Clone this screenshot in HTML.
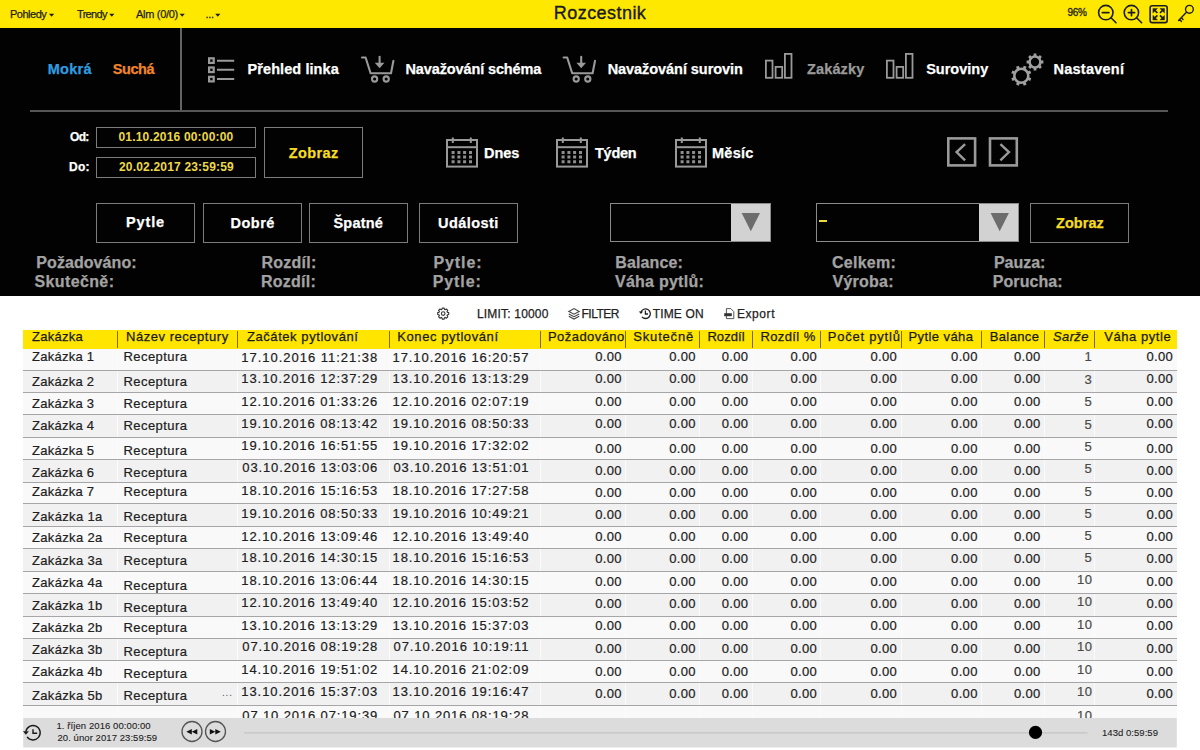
<!DOCTYPE html>
<html><head><meta charset="utf-8">
<style>
html,body{margin:0;padding:0;}
body{width:1200px;height:750px;position:relative;overflow:hidden;background:#fff;font-family:"Liberation Sans",sans-serif;}
.t{position:absolute;line-height:1;white-space:nowrap;}
.abs{position:absolute;}
.box{position:absolute;box-sizing:border-box;border:1px solid #7c7c7c;}
svg{position:absolute;left:0;top:0;overflow:visible;}
</style></head><body>
<!-- top yellow bar -->
<div class="abs" style="left:0;top:0;width:1200px;height:28px;background:#ffe800"></div>
<!-- black area -->
<div class="abs" style="left:0;top:28px;width:1200px;height:268px;background:#020202"></div>
<!-- nav separators -->
<div class="abs" style="left:180px;top:28px;width:2px;height:83px;background:#646464"></div>
<div class="abs" style="left:29.5px;top:110px;width:1138.5px;height:2px;background:#565656"></div>
<!-- boxes -->
<div class="box" style="left:96px;top:126.5px;width:160px;height:21px"></div>
<div class="box" style="left:96px;top:156.5px;width:160px;height:21px"></div>
<div class="box" style="left:264px;top:126.5px;width:99px;height:51px"></div>
<div class="box" style="left:96px;top:203px;width:99px;height:40px"></div>
<div class="box" style="left:203px;top:203px;width:99px;height:40px"></div>
<div class="box" style="left:309px;top:203px;width:99px;height:40px"></div>
<div class="box" style="left:419px;top:203px;width:99px;height:40px"></div>
<div class="box" style="left:610px;top:202.5px;width:160.5px;height:39.5px;border-color:#8a8a8a"></div>
<div class="abs" style="left:730.8px;top:203.5px;width:39px;height:37.5px;background:#d2d2d2"></div>
<div class="box" style="left:816px;top:202.5px;width:202.5px;height:39.5px;border-color:#8a8a8a"></div>
<div class="abs" style="left:979.3px;top:203.5px;width:39px;height:37.5px;background:#d2d2d2"></div>
<div class="box" style="left:1030px;top:203px;width:99px;height:39.5px"></div>
<div class="abs" style="left:818.8px;top:219.8px;width:8.2px;height:2.4px;background:#e8dc38"></div>

<svg width="1200" height="750" viewBox="0 0 1200 750">
 <!-- top bar carets -->
 <g fill="#1e1e1e">
  <path d="M49 13.8h5.2l-2.6 3z"/><path d="M109.2 13.8h5.2l-2.6 3z"/><path d="M179.6 13.8h5.2l-2.6 3z"/><path d="M215.2 13.8h5.2l-2.6 3z"/>
 </g>
 <!-- zoom icons -->
 <g fill="none" stroke="#1e1e1e" stroke-width="1.6" stroke-linecap="round">
  <circle cx="1105.8" cy="12.6" r="7.2"/><path d="M1111 17.8l5 5"/><path d="M1102.4 12.6h6.4" stroke-width="1.9"/>
  <circle cx="1131.4" cy="12.6" r="7.2"/><path d="M1136.6 17.8l5 5"/><path d="M1128.4 12.6h6.2M1131.5 9.5v6.2" stroke-width="1.7"/>
  <rect x="1150.1" y="5.8" width="17.1" height="16.8" rx="2.2"/>
  <circle cx="1189.4" cy="9.3" r="3.9" stroke-width="1.4"/><path d="M1186.7 12.1l-8.1 8.5M1179.6 19.6l1.9 2M1181.4 17.7l1.6 1.7" stroke-width="1.4"/>
 </g>
 <g fill="#1e1e1e" stroke="#1e1e1e" stroke-width="1.4">
  <path d="M1154.6 10.2l2.8 2.8M1162.8 10.2l-2.8 2.8M1154.6 18.2l2.8-2.8M1162.8 18.2l-2.8-2.8" stroke-width="1.7"/>
  <path d="M1152.9 8.5h4.6l-4.6 4.6zM1164.5 8.5h-4.6l4.6 4.6zM1152.9 19.9h4.6l-4.6-4.6zM1164.5 19.9h-4.6l4.6-4.6z" stroke-width="0.4"/>
 </g>
 <!-- list icon -->
 <g fill="none" stroke="#9a9a9a" stroke-width="2.2">
  <rect x="209.1" y="58.3" width="4.6" height="4.6"/><rect x="209.1" y="67.5" width="4.6" height="4.6"/><rect x="209.1" y="76.8" width="4.6" height="4.6"/>
  <path d="M217 60.7h17.2M217 69.8h17.2M217 79h17.2" stroke-width="2"/>
 </g>
 <!-- carts -->
 <g fill="none" stroke="#9a9a9a" stroke-width="2.1" stroke-linejoin="round" stroke-linecap="round">
  <g id="cart">
   <path d="M362 57.5h3.6l5 15.8h20.4l2.4-12.4"/>
   <circle cx="374.6" cy="79" r="2.6"/><circle cx="386.2" cy="79" r="2.6"/>
   <path d="M379.6 56.8v7"/>
  </g>
  <g transform="translate(201.6 0)">
   <path d="M362 57.5h3.6l5 15.8h20.4l2.4-12.4"/>
   <circle cx="374.6" cy="79" r="2.6"/><circle cx="386.2" cy="79" r="2.6"/>
   <path d="M379.6 56.8v7"/>
  </g>
 </g>
 <g fill="#9a9a9a"><path d="M374.8 62.8h9.6l-4.8 5.4z"/><path d="M576.4 62.8h9.6l-4.8 5.4z"/></g>
 <!-- bars -->
 <g fill="none" stroke="#9a9a9a" stroke-width="1.8">
  <rect x="765.9" y="60.6" width="6.6" height="17.2"/><rect x="775.6" y="66.9" width="6.6" height="10.9"/><rect x="784.9" y="53.9" width="6.6" height="23.9"/>
  <rect x="886.9" y="60.6" width="6.6" height="17.2"/><rect x="896.6" y="66.9" width="6.6" height="10.9"/><rect x="905.9" y="53.9" width="6.6" height="23.9"/>
 </g>
 <!-- gears -->
 <g fill="none" stroke="#a0a0a0">
  <circle cx="1021.3" cy="75.7" r="7" stroke-width="2.6"/>
  <path transform="rotate(22.5 1021.3 75.7)" d="M1021.3 65.5v3M1021.3 82.9v3M1011.1 75.7h3M1028.5 75.7h3M1014.1 68.5l2.1 2.1M1026.4 80.8l2.1 2.1M1028.5 68.5l-2.1 2.1M1014.1 82.9l2.1-2.1" stroke-width="3"/>
  <circle cx="1035" cy="62" r="5.4" stroke-width="2.5"/>
  <path d="M1035 53.6v2.6M1035 67.8v2.6M1026.6 62h2.6M1040.8 62h2.6M1029.1 56.1l1.8 1.8M1039.1 66.1l1.8 1.8M1040.9 56.1l-1.8 1.8M1029.1 67.9l1.8-1.8" stroke-width="2.8"/>
 </g>
 <!-- calendars -->
 <g id="cal" fill="none" stroke="#9a9a9a" stroke-width="2">
  <rect x="447" y="140" width="30" height="26.6"/><path d="M447 147.2h30"/><path d="M452.8 137.5v5.5M470.8 137.5v5.5"/>
 </g>
 <g fill="#8e8e8e">
  <path d="M451.6 151h3v3h-3zM457.4 151h3v3h-3zM463.1 151h3v3h-3zM469 151h3v3h-3zM451.6 155.6h3v3h-3zM457.4 155.6h3v3h-3zM463.1 155.6h3v3h-3zM469 155.6h3v3h-3zM451.6 160.2h3v3h-3zM457.4 160.2h3v3h-3zM463.1 160.2h3v3h-3zM469 160.2h3v3h-3z"/>
 </g>
 <g transform="translate(110 0)">
  <g fill="none" stroke="#9a9a9a" stroke-width="2"><rect x="447" y="140" width="30" height="26.6"/><path d="M447 147.2h30"/><path d="M452.8 137.5v5.5M470.8 137.5v5.5"/></g>
  <g fill="#8e8e8e"><path d="M451.6 151h3v3h-3zM457.4 151h3v3h-3zM463.1 151h3v3h-3zM469 151h3v3h-3zM451.6 155.6h3v3h-3zM457.4 155.6h3v3h-3zM463.1 155.6h3v3h-3zM469 155.6h3v3h-3zM451.6 160.2h3v3h-3zM457.4 160.2h3v3h-3zM463.1 160.2h3v3h-3zM469 160.2h3v3h-3z"/></g>
 </g>
 <g transform="translate(229 0)">
  <g fill="none" stroke="#9a9a9a" stroke-width="2"><rect x="447" y="140" width="30" height="26.6"/><path d="M447 147.2h30"/><path d="M452.8 137.5v5.5M470.8 137.5v5.5"/></g>
  <g fill="#8e8e8e"><path d="M451.6 151h3v3h-3zM457.4 151h3v3h-3zM463.1 151h3v3h-3zM469 151h3v3h-3zM451.6 155.6h3v3h-3zM457.4 155.6h3v3h-3zM463.1 155.6h3v3h-3zM469 155.6h3v3h-3zM451.6 160.2h3v3h-3zM457.4 160.2h3v3h-3zM463.1 160.2h3v3h-3zM469 160.2h3v3h-3z"/></g>
 </g>
 <!-- arrow boxes -->
 <g fill="none" stroke="#9a9a9a" stroke-width="2.6">
  <rect x="948.3" y="138.4" width="26.8" height="27"/><rect x="990" y="138.4" width="26.8" height="27"/>
 </g>
 <g fill="none" stroke="#9a9a9a" stroke-width="2.4">
  <path d="M965.1 144.2l-8.5 7.9 8.5 8.2"/><path d="M1000.4 144.2l8.5 7.9-8.5 8.2"/>
 </g>
 <!-- dropdown triangles -->
 <g fill="#6c6c6c"><path d="M741.7 213h18.3l-9.2 18.3z"/><path d="M990.6 213h18.3l-9.2 18.3z"/></g>

 <!-- toolbar icons -->
 <g fill="none" stroke="#333" stroke-width="1.1" stroke-linejoin="round">
  <path d="M447.30 312.30 L448.71 312.62 L448.71 314.58 L447.30 314.90 L447.02 315.58 L447.79 316.81 L446.41 318.19 L445.18 317.42 L444.50 317.70 L444.18 319.11 L442.22 319.11 L441.90 317.70 L441.22 317.42 L439.99 318.19 L438.61 316.81 L439.38 315.58 L439.10 314.90 L437.69 314.58 L437.69 312.62 L439.10 312.30 L439.38 311.62 L438.61 310.39 L439.99 309.01 L441.22 309.78 L441.90 309.50 L442.22 308.09 L444.18 308.09 L444.50 309.50 L445.18 309.78 L446.41 309.01 L447.79 310.39 L447.02 311.62Z"/>
  <circle cx="443.2" cy="313.6" r="1.8"/>
 </g>
 <g fill="none" stroke="#444" stroke-width="1.1">
  <path d="M568.8 311.4l5.2-2.8 5.2 2.8-5.2 2.8z"/><path d="M568.8 313.9l5.2 2.8 5.2-2.8"/><path d="M568.8 316.3l5.2 2.8 5.2-2.8"/>
 </g>
 <g fill="none" stroke="#222" stroke-width="1.3">
  <path d="M641 312.2a4.8 4.8 0 1 1 0.9 4.6"/><path d="M645.4 310.6v3.4h2.6"/>
 </g>
 <path d="M638.8 311.6l2.2 2.4 2-2.4z" fill="#222"/>
 <g fill="none" stroke="#444" stroke-width="0.9">
  <path d="M726.4 308.6h4.4l3 3v7h-7.4z"/>
 </g>
 <rect x="724.2" y="313.2" width="7.6" height="3" fill="#333"/>

</svg>
<div style='position:absolute;left:23px;top:330px;width:1154px;height:18.8px;background:#ffe500'></div>
<div style='position:absolute;left:117.0px;top:331px;width:1px;height:17px;background:#7d6a00'></div>
<div style='position:absolute;left:236.5px;top:331px;width:1px;height:17px;background:#7d6a00'></div>
<div style='position:absolute;left:388.8px;top:331px;width:1px;height:17px;background:#7d6a00'></div>
<div style='position:absolute;left:539.5px;top:331px;width:1px;height:17px;background:#7d6a00'></div>
<div style='position:absolute;left:625.3px;top:331px;width:1px;height:17px;background:#7d6a00'></div>
<div style='position:absolute;left:699.3px;top:331px;width:1px;height:17px;background:#7d6a00'></div>
<div style='position:absolute;left:751.8px;top:331px;width:1px;height:17px;background:#7d6a00'></div>
<div style='position:absolute;left:820.4px;top:331px;width:1px;height:17px;background:#7d6a00'></div>
<div style='position:absolute;left:900.5px;top:331px;width:1px;height:17px;background:#7d6a00'></div>
<div style='position:absolute;left:981.1px;top:331px;width:1px;height:17px;background:#7d6a00'></div>
<div style='position:absolute;left:1043.9px;top:331px;width:1px;height:17px;background:#7d6a00'></div>
<div style='position:absolute;left:1094.1px;top:331px;width:1px;height:17px;background:#7d6a00'></div>
<div style='position:absolute;left:23px;top:348.8px;width:1154px;height:21.6px;background:#f9f9f9'></div>
<div style='position:absolute;left:23px;top:370.4px;width:1154px;height:22.4px;background:#f1f1f1'></div>
<div style='position:absolute;left:23px;top:392.8px;width:1154px;height:21.6px;background:#f9f9f9'></div>
<div style='position:absolute;left:23px;top:414.4px;width:1154px;height:22.7px;background:#f1f1f1'></div>
<div style='position:absolute;left:23px;top:437.1px;width:1154px;height:22.4px;background:#f9f9f9'></div>
<div style='position:absolute;left:23px;top:459.5px;width:1154px;height:22.7px;background:#f1f1f1'></div>
<div style='position:absolute;left:23px;top:482.2px;width:1154px;height:21.6px;background:#f9f9f9'></div>
<div style='position:absolute;left:23px;top:503.8px;width:1154px;height:22.4px;background:#f1f1f1'></div>
<div style='position:absolute;left:23px;top:526.2px;width:1154px;height:22.4px;background:#f9f9f9'></div>
<div style='position:absolute;left:23px;top:548.6px;width:1154px;height:22.9px;background:#f1f1f1'></div>
<div style='position:absolute;left:23px;top:571.5px;width:1154px;height:22.2px;background:#f9f9f9'></div>
<div style='position:absolute;left:23px;top:593.7px;width:1154px;height:22.7px;background:#f1f1f1'></div>
<div style='position:absolute;left:23px;top:616.4px;width:1154px;height:22.1px;background:#f9f9f9'></div>
<div style='position:absolute;left:23px;top:638.5px;width:1154px;height:22.4px;background:#f1f1f1'></div>
<div style='position:absolute;left:23px;top:660.9px;width:1154px;height:21.8px;background:#f9f9f9'></div>
<div style='position:absolute;left:23px;top:682.7px;width:1154px;height:22.5px;background:#f1f1f1'></div>
<div style='position:absolute;left:23px;top:705.2px;width:1154px;height:12.8px;background:#f9f9f9'></div>
<div style='position:absolute;left:117.0px;top:349px;width:1px;height:369px;background:#fbfbfb'></div>
<div style='position:absolute;left:236.5px;top:349px;width:1px;height:369px;background:#fbfbfb'></div>
<div style='position:absolute;left:388.8px;top:349px;width:1px;height:369px;background:#fbfbfb'></div>
<div style='position:absolute;left:539.5px;top:349px;width:1px;height:369px;background:#fbfbfb'></div>
<div style='position:absolute;left:625.3px;top:349px;width:1px;height:369px;background:#fbfbfb'></div>
<div style='position:absolute;left:699.3px;top:349px;width:1px;height:369px;background:#fbfbfb'></div>
<div style='position:absolute;left:751.8px;top:349px;width:1px;height:369px;background:#fbfbfb'></div>
<div style='position:absolute;left:820.4px;top:349px;width:1px;height:369px;background:#fbfbfb'></div>
<div style='position:absolute;left:900.5px;top:349px;width:1px;height:369px;background:#fbfbfb'></div>
<div style='position:absolute;left:981.1px;top:349px;width:1px;height:369px;background:#fbfbfb'></div>
<div style='position:absolute;left:1043.9px;top:349px;width:1px;height:369px;background:#fbfbfb'></div>
<div style='position:absolute;left:1094.1px;top:349px;width:1px;height:369px;background:#fbfbfb'></div>
<div style='position:absolute;left:23px;top:369.9px;width:1154px;height:1px;background:#a6a6a6'></div>
<div style='position:absolute;left:23px;top:392.3px;width:1154px;height:1px;background:#a6a6a6'></div>
<div style='position:absolute;left:23px;top:413.9px;width:1154px;height:1px;background:#a6a6a6'></div>
<div style='position:absolute;left:23px;top:436.6px;width:1154px;height:1px;background:#a6a6a6'></div>
<div style='position:absolute;left:23px;top:459.0px;width:1154px;height:1px;background:#a6a6a6'></div>
<div style='position:absolute;left:23px;top:481.7px;width:1154px;height:1px;background:#a6a6a6'></div>
<div style='position:absolute;left:23px;top:503.3px;width:1154px;height:1px;background:#a6a6a6'></div>
<div style='position:absolute;left:23px;top:525.7px;width:1154px;height:1px;background:#a6a6a6'></div>
<div style='position:absolute;left:23px;top:548.1px;width:1154px;height:1px;background:#a6a6a6'></div>
<div style='position:absolute;left:23px;top:571.0px;width:1154px;height:1px;background:#a6a6a6'></div>
<div style='position:absolute;left:23px;top:593.2px;width:1154px;height:1px;background:#a6a6a6'></div>
<div style='position:absolute;left:23px;top:615.9px;width:1154px;height:1px;background:#a6a6a6'></div>
<div style='position:absolute;left:23px;top:638.0px;width:1154px;height:1px;background:#a6a6a6'></div>
<div style='position:absolute;left:23px;top:660.4px;width:1154px;height:1px;background:#a6a6a6'></div>
<div style='position:absolute;left:23px;top:682.2px;width:1154px;height:1px;background:#a6a6a6'></div>
<div style='position:absolute;left:23px;top:704.7px;width:1154px;height:1px;background:#a6a6a6'></div>
<div class=t style="left:10.00px;top:9.09px;font-size:11px;font-weight:400;color:#1e1e1e;letter-spacing:-0.500px;font-style:normal;-webkit-text-stroke:0.25px currentColor;">Pohledy</div>
<div class=t style="left:77.00px;top:9.09px;font-size:11px;font-weight:400;color:#1e1e1e;letter-spacing:-0.680px;font-style:normal;-webkit-text-stroke:0.25px currentColor;">Trendy</div>
<div class=t style="left:136.00px;top:9.09px;font-size:11px;font-weight:400;color:#1e1e1e;letter-spacing:-0.300px;font-style:normal;-webkit-text-stroke:0.25px currentColor;">Alm (0/0)</div>
<div class=t style="left:205.40px;top:9.09px;font-size:11px;font-weight:400;color:#1e1e1e;letter-spacing:-0.200px;font-style:normal;-webkit-text-stroke:0.25px currentColor;">...</div>
<div class=t style="left:553.80px;top:4.36px;font-size:18px;font-weight:400;color:#1a1a1a;letter-spacing:0.444px;font-style:normal;-webkit-text-stroke:0.35px currentColor;">Rozcestnik</div>
<div class=t style="left:1067.60px;top:7.84px;font-size:10px;font-weight:400;color:#1e1e1e;letter-spacing:-0.400px;font-style:normal;-webkit-text-stroke:0.3px currentColor;">96%</div>
<div class=t style="left:47.75px;top:61.93px;font-size:14.5px;font-weight:700;color:#2e9de0;letter-spacing:0.250px;font-style:normal;-webkit-text-stroke:0.25px currentColor;">Mokrá</div>
<div class=t style="left:112.75px;top:61.93px;font-size:14.5px;font-weight:700;color:#f0862e;letter-spacing:-0.425px;font-style:normal;-webkit-text-stroke:0.25px currentColor;">Suchá</div>
<div class=t style="left:247.50px;top:61.93px;font-size:14.5px;font-weight:700;color:#fff;letter-spacing:0.083px;font-style:normal;-webkit-text-stroke:0.25px currentColor;">Přehled linka</div>
<div class=t style="left:405.50px;top:61.93px;font-size:14.5px;font-weight:700;color:#fff;letter-spacing:-0.125px;font-style:normal;-webkit-text-stroke:0.25px currentColor;">Navažování schéma</div>
<div class=t style="left:607.70px;top:61.93px;font-size:14.5px;font-weight:700;color:#fff;letter-spacing:-0.059px;font-style:normal;-webkit-text-stroke:0.25px currentColor;">Navažování surovin</div>
<div class=t style="left:806.90px;top:61.93px;font-size:14.5px;font-weight:700;color:#9a9a9a;letter-spacing:0.167px;font-style:normal;-webkit-text-stroke:0.25px currentColor;">Zakázky</div>
<div class=t style="left:926.20px;top:61.93px;font-size:14.5px;font-weight:700;color:#fff;letter-spacing:0.000px;font-style:normal;-webkit-text-stroke:0.25px currentColor;">Suroviny</div>
<div class=t style="left:1053.50px;top:61.93px;font-size:14.5px;font-weight:700;color:#fff;letter-spacing:0.250px;font-style:normal;-webkit-text-stroke:0.25px currentColor;">Nastavení</div>
<div class=t style="left:70.00px;top:131.04px;font-size:12px;font-weight:700;color:#fff;letter-spacing:-0.700px;font-style:normal;-webkit-text-stroke:0.25px currentColor;">Od:</div>
<div class=t style="left:69.00px;top:161.44px;font-size:12px;font-weight:700;color:#fff;letter-spacing:0.300px;font-style:normal;-webkit-text-stroke:0.25px currentColor;">Do:</div>
<div class=t style="left:118.50px;top:130.64px;font-size:12px;font-weight:700;color:#ecd848;letter-spacing:0.183px;font-style:normal;">01.10.2016 00:00:00</div>
<div class=t style="left:119.00px;top:161.04px;font-size:12px;font-weight:700;color:#ecd848;letter-spacing:0.183px;font-style:normal;">20.02.2017 23:59:59</div>
<div class=t style="left:288.70px;top:146.23px;font-size:14.5px;font-weight:700;color:#f5dc22;letter-spacing:0.400px;font-style:normal;-webkit-text-stroke:0.25px currentColor;">Zobraz</div>
<div class=t style="left:484.00px;top:146.23px;font-size:14.5px;font-weight:700;color:#fff;letter-spacing:-0.083px;font-style:normal;-webkit-text-stroke:0.25px currentColor;">Dnes</div>
<div class=t style="left:595.00px;top:146.23px;font-size:14.5px;font-weight:700;color:#fff;letter-spacing:-0.250px;font-style:normal;-webkit-text-stroke:0.25px currentColor;">Týden</div>
<div class=t style="left:712.00px;top:146.23px;font-size:14.5px;font-weight:700;color:#fff;letter-spacing:0.250px;font-style:normal;-webkit-text-stroke:0.25px currentColor;">Měsíc</div>
<div class=t style="left:126.00px;top:215.23px;font-size:14.5px;font-weight:700;color:#fff;letter-spacing:0.875px;font-style:normal;-webkit-text-stroke:0.25px currentColor;">Pytle</div>
<div class=t style="left:230.50px;top:215.73px;font-size:14.5px;font-weight:700;color:#fff;letter-spacing:0.500px;font-style:normal;-webkit-text-stroke:0.25px currentColor;">Dobré</div>
<div class=t style="left:333.50px;top:215.73px;font-size:14.5px;font-weight:700;color:#fff;letter-spacing:0.200px;font-style:normal;-webkit-text-stroke:0.25px currentColor;">Špatné</div>
<div class=t style="left:438.00px;top:215.73px;font-size:14.5px;font-weight:700;color:#fff;letter-spacing:0.429px;font-style:normal;-webkit-text-stroke:0.25px currentColor;">Události</div>
<div class=t style="left:1056.00px;top:215.73px;font-size:14.5px;font-weight:700;color:#f5dc22;letter-spacing:0.060px;font-style:normal;-webkit-text-stroke:0.25px currentColor;">Zobraz</div>
<div class=t style="left:36.30px;top:255.26px;font-size:16px;font-weight:700;color:#a3a3a3;letter-spacing:0.070px;font-style:normal;-webkit-text-stroke:0.25px currentColor;">Požadováno:</div>
<div class=t style="left:34.50px;top:274.06px;font-size:16px;font-weight:700;color:#a3a3a3;letter-spacing:0.375px;font-style:normal;-webkit-text-stroke:0.25px currentColor;">Skutečně:</div>
<div class=t style="left:261.50px;top:255.26px;font-size:16px;font-weight:700;color:#a3a3a3;letter-spacing:0.250px;font-style:normal;-webkit-text-stroke:0.25px currentColor;">Rozdíl:</div>
<div class=t style="left:261.00px;top:274.06px;font-size:16px;font-weight:700;color:#a3a3a3;letter-spacing:0.250px;font-style:normal;-webkit-text-stroke:0.25px currentColor;">Rozdíl:</div>
<div class=t style="left:433.50px;top:255.26px;font-size:16px;font-weight:700;color:#a3a3a3;letter-spacing:0.900px;font-style:normal;-webkit-text-stroke:0.25px currentColor;">Pytle:</div>
<div class=t style="left:432.75px;top:274.06px;font-size:16px;font-weight:700;color:#a3a3a3;letter-spacing:0.900px;font-style:normal;-webkit-text-stroke:0.25px currentColor;">Pytle:</div>
<div class=t style="left:615.25px;top:255.26px;font-size:16px;font-weight:700;color:#a3a3a3;letter-spacing:0.143px;font-style:normal;-webkit-text-stroke:0.25px currentColor;">Balance:</div>
<div class=t style="left:615.00px;top:274.06px;font-size:16px;font-weight:700;color:#a3a3a3;letter-spacing:0.250px;font-style:normal;-webkit-text-stroke:0.25px currentColor;">Váha pytlů:</div>
<div class=t style="left:832.00px;top:255.26px;font-size:16px;font-weight:700;color:#a3a3a3;letter-spacing:0.250px;font-style:normal;-webkit-text-stroke:0.25px currentColor;">Celkem:</div>
<div class=t style="left:832.50px;top:274.06px;font-size:16px;font-weight:700;color:#a3a3a3;letter-spacing:0.250px;font-style:normal;-webkit-text-stroke:0.25px currentColor;">Výroba:</div>
<div class=t style="left:994.00px;top:255.26px;font-size:16px;font-weight:700;color:#a3a3a3;letter-spacing:-0.050px;font-style:normal;-webkit-text-stroke:0.25px currentColor;">Pauza:</div>
<div class=t style="left:992.75px;top:274.06px;font-size:16px;font-weight:700;color:#a3a3a3;letter-spacing:0.071px;font-style:normal;-webkit-text-stroke:0.25px currentColor;">Porucha:</div>
<div class=t style="left:477.00px;top:307.59px;font-size:12px;font-weight:400;color:#222;letter-spacing:0.182px;font-style:normal;-webkit-text-stroke:0.25px currentColor;">LIMIT: 10000</div>
<div class=t style="left:581.50px;top:307.59px;font-size:12px;font-weight:400;color:#222;letter-spacing:-0.500px;font-style:normal;-webkit-text-stroke:0.25px currentColor;">FILTER</div>
<div class=t style="left:652.80px;top:307.59px;font-size:12px;font-weight:400;color:#222;letter-spacing:0.133px;font-style:normal;-webkit-text-stroke:0.25px currentColor;">TIME ON</div>
<div class=t style="left:737.00px;top:307.59px;font-size:12px;font-weight:400;color:#222;letter-spacing:0.560px;font-style:normal;-webkit-text-stroke:0.25px currentColor;">Export</div>
<div class=t style="left:32.00px;top:330.25px;font-size:13px;font-weight:400;color:#1a1a1a;letter-spacing:0.250px;font-style:normal;-webkit-text-stroke:0.25px currentColor;">Zakázka</div>
<div class=t style="left:126.00px;top:330.25px;font-size:13px;font-weight:400;color:#1a1a1a;letter-spacing:0.536px;font-style:normal;-webkit-text-stroke:0.25px currentColor;">Název receptury</div>
<div class=t style="left:247.00px;top:330.25px;font-size:13px;font-weight:400;color:#1a1a1a;letter-spacing:0.562px;font-style:normal;-webkit-text-stroke:0.25px currentColor;">Začátek pytlování</div>
<div class=t style="left:397.30px;top:330.25px;font-size:13px;font-weight:400;color:#1a1a1a;letter-spacing:0.586px;font-style:normal;-webkit-text-stroke:0.25px currentColor;">Konec pytlování</div>
<div class=t style="left:548.00px;top:330.25px;font-size:13px;font-weight:400;color:#1a1a1a;letter-spacing:0.444px;font-style:normal;-webkit-text-stroke:0.25px currentColor;">Požadováno</div>
<div class=t style="left:633.30px;top:330.25px;font-size:13px;font-weight:400;color:#1a1a1a;letter-spacing:0.814px;font-style:normal;-webkit-text-stroke:0.25px currentColor;">Skutečně</div>
<div class=t style="left:707.40px;top:330.25px;font-size:13px;font-weight:400;color:#1a1a1a;letter-spacing:0.080px;font-style:normal;-webkit-text-stroke:0.25px currentColor;">Rozdíl</div>
<div class=t style="left:760.40px;top:330.25px;font-size:13px;font-weight:400;color:#1a1a1a;letter-spacing:0.400px;font-style:normal;-webkit-text-stroke:0.25px currentColor;">Rozdíl %</div>
<div class=t style="left:827.80px;top:330.25px;font-size:13px;font-weight:400;color:#1a1a1a;letter-spacing:0.780px;font-style:normal;-webkit-text-stroke:0.25px currentColor;">Počet pytlů</div>
<div class=t style="left:908.50px;top:330.25px;font-size:13px;font-weight:400;color:#1a1a1a;letter-spacing:0.422px;font-style:normal;-webkit-text-stroke:0.25px currentColor;">Pytle váha</div>
<div class=t style="left:989.70px;top:330.25px;font-size:13px;font-weight:400;color:#1a1a1a;letter-spacing:0.383px;font-style:normal;-webkit-text-stroke:0.25px currentColor;">Balance</div>
<div class=t style="left:1053.00px;top:330.25px;font-size:13px;font-weight:400;color:#1a1a1a;letter-spacing:0.375px;font-style:italic;-webkit-text-stroke:0.25px currentColor;">Sarže</div>
<div class=t style="left:1104.20px;top:330.25px;font-size:13px;font-weight:400;color:#1a1a1a;letter-spacing:0.567px;font-style:normal;-webkit-text-stroke:0.25px currentColor;">Váha pytle</div>
<div class=t style="left:32.00px;top:350.40px;font-size:13px;font-weight:400;color:#202020;letter-spacing:0.250px;font-style:normal;-webkit-text-stroke:0.2px currentColor;">Zakázka 1</div>
<div class=t style="left:123.50px;top:350.40px;font-size:13px;font-weight:400;color:#202020;letter-spacing:0.438px;font-style:normal;-webkit-text-stroke:0.2px currentColor;">Receptura</div>
<div class=t style="left:241.30px;top:350.50px;font-size:13px;font-weight:400;color:#202020;letter-spacing:0.983px;font-style:normal;-webkit-text-stroke:0.2px currentColor;">17.10.2016 11:21:38</div>
<div class=t style="left:392.50px;top:350.50px;font-size:13px;font-weight:400;color:#202020;letter-spacing:0.928px;font-style:normal;-webkit-text-stroke:0.2px currentColor;">17.10.2016 16:20:57</div>
<div class=t style="left:595.30px;top:350.20px;font-size:13px;font-weight:400;color:#202020;letter-spacing:0.333px;font-style:normal;-webkit-text-stroke:0.2px currentColor;">0.00</div>
<div class=t style="left:669.30px;top:350.20px;font-size:13px;font-weight:400;color:#202020;letter-spacing:0.333px;font-style:normal;-webkit-text-stroke:0.2px currentColor;">0.00</div>
<div class=t style="left:721.80px;top:350.20px;font-size:13px;font-weight:400;color:#202020;letter-spacing:0.333px;font-style:normal;-webkit-text-stroke:0.2px currentColor;">0.00</div>
<div class=t style="left:790.40px;top:350.20px;font-size:13px;font-weight:400;color:#202020;letter-spacing:0.333px;font-style:normal;-webkit-text-stroke:0.2px currentColor;">0.00</div>
<div class=t style="left:870.50px;top:350.20px;font-size:13px;font-weight:400;color:#202020;letter-spacing:0.333px;font-style:normal;-webkit-text-stroke:0.2px currentColor;">0.00</div>
<div class=t style="left:951.10px;top:350.20px;font-size:13px;font-weight:400;color:#202020;letter-spacing:0.333px;font-style:normal;-webkit-text-stroke:0.2px currentColor;">0.00</div>
<div class=t style="left:1013.90px;top:350.20px;font-size:13px;font-weight:400;color:#202020;letter-spacing:0.333px;font-style:normal;-webkit-text-stroke:0.2px currentColor;">0.00</div>
<div class=t style="left:1146.50px;top:350.20px;font-size:13px;font-weight:400;color:#202020;letter-spacing:0.333px;font-style:normal;-webkit-text-stroke:0.2px currentColor;">0.00</div>
<div class=t style="left:1084.50px;top:349.80px;font-size:13px;font-weight:400;color:#4a4a4a;letter-spacing:0.000px;font-style:normal;-webkit-text-stroke:0.2px currentColor;">1</div>
<div class=t style="left:32.00px;top:375.00px;font-size:13px;font-weight:400;color:#202020;letter-spacing:0.250px;font-style:normal;-webkit-text-stroke:0.2px currentColor;">Zakázka 2</div>
<div class=t style="left:123.50px;top:375.00px;font-size:13px;font-weight:400;color:#202020;letter-spacing:0.438px;font-style:normal;-webkit-text-stroke:0.2px currentColor;">Receptura</div>
<div class=t style="left:241.30px;top:372.00px;font-size:13px;font-weight:400;color:#202020;letter-spacing:0.928px;font-style:normal;-webkit-text-stroke:0.2px currentColor;">13.10.2016 12:37:29</div>
<div class=t style="left:392.50px;top:372.00px;font-size:13px;font-weight:400;color:#202020;letter-spacing:0.928px;font-style:normal;-webkit-text-stroke:0.2px currentColor;">13.10.2016 13:13:29</div>
<div class=t style="left:595.30px;top:372.40px;font-size:13px;font-weight:400;color:#202020;letter-spacing:0.333px;font-style:normal;-webkit-text-stroke:0.2px currentColor;">0.00</div>
<div class=t style="left:669.30px;top:372.40px;font-size:13px;font-weight:400;color:#202020;letter-spacing:0.333px;font-style:normal;-webkit-text-stroke:0.2px currentColor;">0.00</div>
<div class=t style="left:721.80px;top:372.40px;font-size:13px;font-weight:400;color:#202020;letter-spacing:0.333px;font-style:normal;-webkit-text-stroke:0.2px currentColor;">0.00</div>
<div class=t style="left:790.40px;top:372.40px;font-size:13px;font-weight:400;color:#202020;letter-spacing:0.333px;font-style:normal;-webkit-text-stroke:0.2px currentColor;">0.00</div>
<div class=t style="left:870.50px;top:372.40px;font-size:13px;font-weight:400;color:#202020;letter-spacing:0.333px;font-style:normal;-webkit-text-stroke:0.2px currentColor;">0.00</div>
<div class=t style="left:951.10px;top:372.40px;font-size:13px;font-weight:400;color:#202020;letter-spacing:0.333px;font-style:normal;-webkit-text-stroke:0.2px currentColor;">0.00</div>
<div class=t style="left:1013.90px;top:372.40px;font-size:13px;font-weight:400;color:#202020;letter-spacing:0.333px;font-style:normal;-webkit-text-stroke:0.2px currentColor;">0.00</div>
<div class=t style="left:1146.50px;top:372.40px;font-size:13px;font-weight:400;color:#202020;letter-spacing:0.333px;font-style:normal;-webkit-text-stroke:0.2px currentColor;">0.00</div>
<div class=t style="left:1084.50px;top:372.50px;font-size:13px;font-weight:400;color:#4a4a4a;letter-spacing:0.000px;font-style:normal;-webkit-text-stroke:0.2px currentColor;">3</div>
<div class=t style="left:32.00px;top:396.60px;font-size:13px;font-weight:400;color:#202020;letter-spacing:0.250px;font-style:normal;-webkit-text-stroke:0.2px currentColor;">Zakázka 3</div>
<div class=t style="left:123.50px;top:396.60px;font-size:13px;font-weight:400;color:#202020;letter-spacing:0.438px;font-style:normal;-webkit-text-stroke:0.2px currentColor;">Receptura</div>
<div class=t style="left:241.30px;top:394.80px;font-size:13px;font-weight:400;color:#202020;letter-spacing:0.928px;font-style:normal;-webkit-text-stroke:0.2px currentColor;">12.10.2016 01:33:26</div>
<div class=t style="left:392.50px;top:394.80px;font-size:13px;font-weight:400;color:#202020;letter-spacing:0.928px;font-style:normal;-webkit-text-stroke:0.2px currentColor;">12.10.2016 02:07:19</div>
<div class=t style="left:595.30px;top:395.10px;font-size:13px;font-weight:400;color:#202020;letter-spacing:0.333px;font-style:normal;-webkit-text-stroke:0.2px currentColor;">0.00</div>
<div class=t style="left:669.30px;top:395.10px;font-size:13px;font-weight:400;color:#202020;letter-spacing:0.333px;font-style:normal;-webkit-text-stroke:0.2px currentColor;">0.00</div>
<div class=t style="left:721.80px;top:395.10px;font-size:13px;font-weight:400;color:#202020;letter-spacing:0.333px;font-style:normal;-webkit-text-stroke:0.2px currentColor;">0.00</div>
<div class=t style="left:790.40px;top:395.10px;font-size:13px;font-weight:400;color:#202020;letter-spacing:0.333px;font-style:normal;-webkit-text-stroke:0.2px currentColor;">0.00</div>
<div class=t style="left:870.50px;top:395.10px;font-size:13px;font-weight:400;color:#202020;letter-spacing:0.333px;font-style:normal;-webkit-text-stroke:0.2px currentColor;">0.00</div>
<div class=t style="left:951.10px;top:395.10px;font-size:13px;font-weight:400;color:#202020;letter-spacing:0.333px;font-style:normal;-webkit-text-stroke:0.2px currentColor;">0.00</div>
<div class=t style="left:1013.90px;top:395.10px;font-size:13px;font-weight:400;color:#202020;letter-spacing:0.333px;font-style:normal;-webkit-text-stroke:0.2px currentColor;">0.00</div>
<div class=t style="left:1146.50px;top:395.10px;font-size:13px;font-weight:400;color:#202020;letter-spacing:0.333px;font-style:normal;-webkit-text-stroke:0.2px currentColor;">0.00</div>
<div class=t style="left:1084.50px;top:395.30px;font-size:13px;font-weight:400;color:#4a4a4a;letter-spacing:0.000px;font-style:normal;-webkit-text-stroke:0.2px currentColor;">5</div>
<div class=t style="left:32.00px;top:419.40px;font-size:13px;font-weight:400;color:#202020;letter-spacing:0.250px;font-style:normal;-webkit-text-stroke:0.2px currentColor;">Zakázka 4</div>
<div class=t style="left:123.50px;top:419.40px;font-size:13px;font-weight:400;color:#202020;letter-spacing:0.438px;font-style:normal;-webkit-text-stroke:0.2px currentColor;">Receptura</div>
<div class=t style="left:241.30px;top:417.00px;font-size:13px;font-weight:400;color:#202020;letter-spacing:0.928px;font-style:normal;-webkit-text-stroke:0.2px currentColor;">19.10.2016 08:13:42</div>
<div class=t style="left:392.50px;top:417.00px;font-size:13px;font-weight:400;color:#202020;letter-spacing:0.928px;font-style:normal;-webkit-text-stroke:0.2px currentColor;">19.10.2016 08:50:33</div>
<div class=t style="left:595.30px;top:417.30px;font-size:13px;font-weight:400;color:#202020;letter-spacing:0.333px;font-style:normal;-webkit-text-stroke:0.2px currentColor;">0.00</div>
<div class=t style="left:669.30px;top:417.30px;font-size:13px;font-weight:400;color:#202020;letter-spacing:0.333px;font-style:normal;-webkit-text-stroke:0.2px currentColor;">0.00</div>
<div class=t style="left:721.80px;top:417.30px;font-size:13px;font-weight:400;color:#202020;letter-spacing:0.333px;font-style:normal;-webkit-text-stroke:0.2px currentColor;">0.00</div>
<div class=t style="left:790.40px;top:417.30px;font-size:13px;font-weight:400;color:#202020;letter-spacing:0.333px;font-style:normal;-webkit-text-stroke:0.2px currentColor;">0.00</div>
<div class=t style="left:870.50px;top:417.30px;font-size:13px;font-weight:400;color:#202020;letter-spacing:0.333px;font-style:normal;-webkit-text-stroke:0.2px currentColor;">0.00</div>
<div class=t style="left:951.10px;top:417.30px;font-size:13px;font-weight:400;color:#202020;letter-spacing:0.333px;font-style:normal;-webkit-text-stroke:0.2px currentColor;">0.00</div>
<div class=t style="left:1013.90px;top:417.30px;font-size:13px;font-weight:400;color:#202020;letter-spacing:0.333px;font-style:normal;-webkit-text-stroke:0.2px currentColor;">0.00</div>
<div class=t style="left:1146.50px;top:417.30px;font-size:13px;font-weight:400;color:#202020;letter-spacing:0.333px;font-style:normal;-webkit-text-stroke:0.2px currentColor;">0.00</div>
<div class=t style="left:1084.50px;top:417.50px;font-size:13px;font-weight:400;color:#4a4a4a;letter-spacing:0.000px;font-style:normal;-webkit-text-stroke:0.2px currentColor;">5</div>
<div class=t style="left:32.00px;top:444.40px;font-size:13px;font-weight:400;color:#202020;letter-spacing:0.250px;font-style:normal;-webkit-text-stroke:0.2px currentColor;">Zakázka 5</div>
<div class=t style="left:123.50px;top:444.40px;font-size:13px;font-weight:400;color:#202020;letter-spacing:0.438px;font-style:normal;-webkit-text-stroke:0.2px currentColor;">Receptura</div>
<div class=t style="left:241.30px;top:439.10px;font-size:13px;font-weight:400;color:#202020;letter-spacing:0.928px;font-style:normal;-webkit-text-stroke:0.2px currentColor;">19.10.2016 16:51:55</div>
<div class=t style="left:392.50px;top:439.10px;font-size:13px;font-weight:400;color:#202020;letter-spacing:0.928px;font-style:normal;-webkit-text-stroke:0.2px currentColor;">19.10.2016 17:32:02</div>
<div class=t style="left:595.30px;top:441.70px;font-size:13px;font-weight:400;color:#202020;letter-spacing:0.333px;font-style:normal;-webkit-text-stroke:0.2px currentColor;">0.00</div>
<div class=t style="left:669.30px;top:441.70px;font-size:13px;font-weight:400;color:#202020;letter-spacing:0.333px;font-style:normal;-webkit-text-stroke:0.2px currentColor;">0.00</div>
<div class=t style="left:721.80px;top:441.70px;font-size:13px;font-weight:400;color:#202020;letter-spacing:0.333px;font-style:normal;-webkit-text-stroke:0.2px currentColor;">0.00</div>
<div class=t style="left:790.40px;top:441.70px;font-size:13px;font-weight:400;color:#202020;letter-spacing:0.333px;font-style:normal;-webkit-text-stroke:0.2px currentColor;">0.00</div>
<div class=t style="left:870.50px;top:441.70px;font-size:13px;font-weight:400;color:#202020;letter-spacing:0.333px;font-style:normal;-webkit-text-stroke:0.2px currentColor;">0.00</div>
<div class=t style="left:951.10px;top:441.70px;font-size:13px;font-weight:400;color:#202020;letter-spacing:0.333px;font-style:normal;-webkit-text-stroke:0.2px currentColor;">0.00</div>
<div class=t style="left:1013.90px;top:441.70px;font-size:13px;font-weight:400;color:#202020;letter-spacing:0.333px;font-style:normal;-webkit-text-stroke:0.2px currentColor;">0.00</div>
<div class=t style="left:1146.50px;top:441.70px;font-size:13px;font-weight:400;color:#202020;letter-spacing:0.333px;font-style:normal;-webkit-text-stroke:0.2px currentColor;">0.00</div>
<div class=t style="left:1084.50px;top:439.80px;font-size:13px;font-weight:400;color:#4a4a4a;letter-spacing:0.000px;font-style:normal;-webkit-text-stroke:0.2px currentColor;">5</div>
<div class=t style="left:32.00px;top:465.60px;font-size:13px;font-weight:400;color:#202020;letter-spacing:0.250px;font-style:normal;-webkit-text-stroke:0.2px currentColor;">Zakázka 6</div>
<div class=t style="left:123.50px;top:465.60px;font-size:13px;font-weight:400;color:#202020;letter-spacing:0.438px;font-style:normal;-webkit-text-stroke:0.2px currentColor;">Receptura</div>
<div class=t style="left:242.30px;top:461.30px;font-size:13px;font-weight:400;color:#202020;letter-spacing:0.872px;font-style:normal;-webkit-text-stroke:0.2px currentColor;">03.10.2016 13:03:06</div>
<div class=t style="left:393.50px;top:461.30px;font-size:13px;font-weight:400;color:#202020;letter-spacing:0.872px;font-style:normal;-webkit-text-stroke:0.2px currentColor;">03.10.2016 13:51:01</div>
<div class=t style="left:595.30px;top:464.10px;font-size:13px;font-weight:400;color:#202020;letter-spacing:0.333px;font-style:normal;-webkit-text-stroke:0.2px currentColor;">0.00</div>
<div class=t style="left:669.30px;top:464.10px;font-size:13px;font-weight:400;color:#202020;letter-spacing:0.333px;font-style:normal;-webkit-text-stroke:0.2px currentColor;">0.00</div>
<div class=t style="left:721.80px;top:464.10px;font-size:13px;font-weight:400;color:#202020;letter-spacing:0.333px;font-style:normal;-webkit-text-stroke:0.2px currentColor;">0.00</div>
<div class=t style="left:790.40px;top:464.10px;font-size:13px;font-weight:400;color:#202020;letter-spacing:0.333px;font-style:normal;-webkit-text-stroke:0.2px currentColor;">0.00</div>
<div class=t style="left:870.50px;top:464.10px;font-size:13px;font-weight:400;color:#202020;letter-spacing:0.333px;font-style:normal;-webkit-text-stroke:0.2px currentColor;">0.00</div>
<div class=t style="left:951.10px;top:464.10px;font-size:13px;font-weight:400;color:#202020;letter-spacing:0.333px;font-style:normal;-webkit-text-stroke:0.2px currentColor;">0.00</div>
<div class=t style="left:1013.90px;top:464.10px;font-size:13px;font-weight:400;color:#202020;letter-spacing:0.333px;font-style:normal;-webkit-text-stroke:0.2px currentColor;">0.00</div>
<div class=t style="left:1146.50px;top:464.10px;font-size:13px;font-weight:400;color:#202020;letter-spacing:0.333px;font-style:normal;-webkit-text-stroke:0.2px currentColor;">0.00</div>
<div class=t style="left:1084.50px;top:461.80px;font-size:13px;font-weight:400;color:#4a4a4a;letter-spacing:0.000px;font-style:normal;-webkit-text-stroke:0.2px currentColor;">5</div>
<div class=t style="left:32.00px;top:485.00px;font-size:13px;font-weight:400;color:#202020;letter-spacing:0.250px;font-style:normal;-webkit-text-stroke:0.2px currentColor;">Zakázka 7</div>
<div class=t style="left:123.50px;top:485.00px;font-size:13px;font-weight:400;color:#202020;letter-spacing:0.438px;font-style:normal;-webkit-text-stroke:0.2px currentColor;">Receptura</div>
<div class=t style="left:241.30px;top:483.50px;font-size:13px;font-weight:400;color:#202020;letter-spacing:0.928px;font-style:normal;-webkit-text-stroke:0.2px currentColor;">18.10.2016 15:16:53</div>
<div class=t style="left:392.50px;top:483.50px;font-size:13px;font-weight:400;color:#202020;letter-spacing:0.928px;font-style:normal;-webkit-text-stroke:0.2px currentColor;">18.10.2016 17:27:58</div>
<div class=t style="left:595.30px;top:486.40px;font-size:13px;font-weight:400;color:#202020;letter-spacing:0.333px;font-style:normal;-webkit-text-stroke:0.2px currentColor;">0.00</div>
<div class=t style="left:669.30px;top:486.40px;font-size:13px;font-weight:400;color:#202020;letter-spacing:0.333px;font-style:normal;-webkit-text-stroke:0.2px currentColor;">0.00</div>
<div class=t style="left:721.80px;top:486.40px;font-size:13px;font-weight:400;color:#202020;letter-spacing:0.333px;font-style:normal;-webkit-text-stroke:0.2px currentColor;">0.00</div>
<div class=t style="left:790.40px;top:486.40px;font-size:13px;font-weight:400;color:#202020;letter-spacing:0.333px;font-style:normal;-webkit-text-stroke:0.2px currentColor;">0.00</div>
<div class=t style="left:870.50px;top:486.40px;font-size:13px;font-weight:400;color:#202020;letter-spacing:0.333px;font-style:normal;-webkit-text-stroke:0.2px currentColor;">0.00</div>
<div class=t style="left:951.10px;top:486.40px;font-size:13px;font-weight:400;color:#202020;letter-spacing:0.333px;font-style:normal;-webkit-text-stroke:0.2px currentColor;">0.00</div>
<div class=t style="left:1013.90px;top:486.40px;font-size:13px;font-weight:400;color:#202020;letter-spacing:0.333px;font-style:normal;-webkit-text-stroke:0.2px currentColor;">0.00</div>
<div class=t style="left:1146.50px;top:486.40px;font-size:13px;font-weight:400;color:#202020;letter-spacing:0.333px;font-style:normal;-webkit-text-stroke:0.2px currentColor;">0.00</div>
<div class=t style="left:1084.50px;top:484.60px;font-size:13px;font-weight:400;color:#4a4a4a;letter-spacing:0.000px;font-style:normal;-webkit-text-stroke:0.2px currentColor;">5</div>
<div class=t style="left:32.00px;top:509.60px;font-size:13px;font-weight:400;color:#202020;letter-spacing:0.333px;font-style:normal;-webkit-text-stroke:0.2px currentColor;">Zakázka 1a</div>
<div class=t style="left:123.50px;top:509.60px;font-size:13px;font-weight:400;color:#202020;letter-spacing:0.438px;font-style:normal;-webkit-text-stroke:0.2px currentColor;">Receptura</div>
<div class=t style="left:241.30px;top:506.60px;font-size:13px;font-weight:400;color:#202020;letter-spacing:0.928px;font-style:normal;-webkit-text-stroke:0.2px currentColor;">19.10.2016 08:50:33</div>
<div class=t style="left:392.50px;top:506.60px;font-size:13px;font-weight:400;color:#202020;letter-spacing:0.928px;font-style:normal;-webkit-text-stroke:0.2px currentColor;">19.10.2016 10:49:21</div>
<div class=t style="left:595.30px;top:508.40px;font-size:13px;font-weight:400;color:#202020;letter-spacing:0.333px;font-style:normal;-webkit-text-stroke:0.2px currentColor;">0.00</div>
<div class=t style="left:669.30px;top:508.40px;font-size:13px;font-weight:400;color:#202020;letter-spacing:0.333px;font-style:normal;-webkit-text-stroke:0.2px currentColor;">0.00</div>
<div class=t style="left:721.80px;top:508.40px;font-size:13px;font-weight:400;color:#202020;letter-spacing:0.333px;font-style:normal;-webkit-text-stroke:0.2px currentColor;">0.00</div>
<div class=t style="left:790.40px;top:508.40px;font-size:13px;font-weight:400;color:#202020;letter-spacing:0.333px;font-style:normal;-webkit-text-stroke:0.2px currentColor;">0.00</div>
<div class=t style="left:870.50px;top:508.40px;font-size:13px;font-weight:400;color:#202020;letter-spacing:0.333px;font-style:normal;-webkit-text-stroke:0.2px currentColor;">0.00</div>
<div class=t style="left:951.10px;top:508.40px;font-size:13px;font-weight:400;color:#202020;letter-spacing:0.333px;font-style:normal;-webkit-text-stroke:0.2px currentColor;">0.00</div>
<div class=t style="left:1013.90px;top:508.40px;font-size:13px;font-weight:400;color:#202020;letter-spacing:0.333px;font-style:normal;-webkit-text-stroke:0.2px currentColor;">0.00</div>
<div class=t style="left:1146.50px;top:508.40px;font-size:13px;font-weight:400;color:#202020;letter-spacing:0.333px;font-style:normal;-webkit-text-stroke:0.2px currentColor;">0.00</div>
<div class=t style="left:1084.50px;top:506.90px;font-size:13px;font-weight:400;color:#4a4a4a;letter-spacing:0.000px;font-style:normal;-webkit-text-stroke:0.2px currentColor;">5</div>
<div class=t style="left:32.00px;top:531.40px;font-size:13px;font-weight:400;color:#202020;letter-spacing:0.333px;font-style:normal;-webkit-text-stroke:0.2px currentColor;">Zakázka 2a</div>
<div class=t style="left:123.50px;top:531.40px;font-size:13px;font-weight:400;color:#202020;letter-spacing:0.438px;font-style:normal;-webkit-text-stroke:0.2px currentColor;">Receptura</div>
<div class=t style="left:241.30px;top:529.70px;font-size:13px;font-weight:400;color:#202020;letter-spacing:0.928px;font-style:normal;-webkit-text-stroke:0.2px currentColor;">12.10.2016 13:09:46</div>
<div class=t style="left:392.50px;top:529.70px;font-size:13px;font-weight:400;color:#202020;letter-spacing:0.928px;font-style:normal;-webkit-text-stroke:0.2px currentColor;">12.10.2016 13:49:40</div>
<div class=t style="left:595.30px;top:529.70px;font-size:13px;font-weight:400;color:#202020;letter-spacing:0.333px;font-style:normal;-webkit-text-stroke:0.2px currentColor;">0.00</div>
<div class=t style="left:669.30px;top:529.70px;font-size:13px;font-weight:400;color:#202020;letter-spacing:0.333px;font-style:normal;-webkit-text-stroke:0.2px currentColor;">0.00</div>
<div class=t style="left:721.80px;top:529.70px;font-size:13px;font-weight:400;color:#202020;letter-spacing:0.333px;font-style:normal;-webkit-text-stroke:0.2px currentColor;">0.00</div>
<div class=t style="left:790.40px;top:529.70px;font-size:13px;font-weight:400;color:#202020;letter-spacing:0.333px;font-style:normal;-webkit-text-stroke:0.2px currentColor;">0.00</div>
<div class=t style="left:870.50px;top:529.70px;font-size:13px;font-weight:400;color:#202020;letter-spacing:0.333px;font-style:normal;-webkit-text-stroke:0.2px currentColor;">0.00</div>
<div class=t style="left:951.10px;top:529.70px;font-size:13px;font-weight:400;color:#202020;letter-spacing:0.333px;font-style:normal;-webkit-text-stroke:0.2px currentColor;">0.00</div>
<div class=t style="left:1013.90px;top:529.70px;font-size:13px;font-weight:400;color:#202020;letter-spacing:0.333px;font-style:normal;-webkit-text-stroke:0.2px currentColor;">0.00</div>
<div class=t style="left:1146.50px;top:529.70px;font-size:13px;font-weight:400;color:#202020;letter-spacing:0.333px;font-style:normal;-webkit-text-stroke:0.2px currentColor;">0.00</div>
<div class=t style="left:1084.50px;top:529.10px;font-size:13px;font-weight:400;color:#4a4a4a;letter-spacing:0.000px;font-style:normal;-webkit-text-stroke:0.2px currentColor;">5</div>
<div class=t style="left:32.00px;top:554.00px;font-size:13px;font-weight:400;color:#202020;letter-spacing:0.333px;font-style:normal;-webkit-text-stroke:0.2px currentColor;">Zakázka 3a</div>
<div class=t style="left:123.50px;top:554.00px;font-size:13px;font-weight:400;color:#202020;letter-spacing:0.438px;font-style:normal;-webkit-text-stroke:0.2px currentColor;">Receptura</div>
<div class=t style="left:241.30px;top:551.10px;font-size:13px;font-weight:400;color:#202020;letter-spacing:0.928px;font-style:normal;-webkit-text-stroke:0.2px currentColor;">18.10.2016 14:30:15</div>
<div class=t style="left:392.50px;top:551.10px;font-size:13px;font-weight:400;color:#202020;letter-spacing:0.928px;font-style:normal;-webkit-text-stroke:0.2px currentColor;">18.10.2016 15:16:53</div>
<div class=t style="left:595.30px;top:552.10px;font-size:13px;font-weight:400;color:#202020;letter-spacing:0.333px;font-style:normal;-webkit-text-stroke:0.2px currentColor;">0.00</div>
<div class=t style="left:669.30px;top:552.10px;font-size:13px;font-weight:400;color:#202020;letter-spacing:0.333px;font-style:normal;-webkit-text-stroke:0.2px currentColor;">0.00</div>
<div class=t style="left:721.80px;top:552.10px;font-size:13px;font-weight:400;color:#202020;letter-spacing:0.333px;font-style:normal;-webkit-text-stroke:0.2px currentColor;">0.00</div>
<div class=t style="left:790.40px;top:552.10px;font-size:13px;font-weight:400;color:#202020;letter-spacing:0.333px;font-style:normal;-webkit-text-stroke:0.2px currentColor;">0.00</div>
<div class=t style="left:870.50px;top:552.10px;font-size:13px;font-weight:400;color:#202020;letter-spacing:0.333px;font-style:normal;-webkit-text-stroke:0.2px currentColor;">0.00</div>
<div class=t style="left:951.10px;top:552.10px;font-size:13px;font-weight:400;color:#202020;letter-spacing:0.333px;font-style:normal;-webkit-text-stroke:0.2px currentColor;">0.00</div>
<div class=t style="left:1013.90px;top:552.10px;font-size:13px;font-weight:400;color:#202020;letter-spacing:0.333px;font-style:normal;-webkit-text-stroke:0.2px currentColor;">0.00</div>
<div class=t style="left:1146.50px;top:552.10px;font-size:13px;font-weight:400;color:#202020;letter-spacing:0.333px;font-style:normal;-webkit-text-stroke:0.2px currentColor;">0.00</div>
<div class=t style="left:1084.50px;top:550.90px;font-size:13px;font-weight:400;color:#4a4a4a;letter-spacing:0.000px;font-style:normal;-webkit-text-stroke:0.2px currentColor;">5</div>
<div class=t style="left:32.00px;top:575.60px;font-size:13px;font-weight:400;color:#202020;letter-spacing:0.333px;font-style:normal;-webkit-text-stroke:0.2px currentColor;">Zakázka 4a</div>
<div class=t style="left:123.50px;top:579.40px;font-size:13px;font-weight:400;color:#202020;letter-spacing:0.438px;font-style:normal;-webkit-text-stroke:0.2px currentColor;">Receptura</div>
<div class=t style="left:241.30px;top:573.60px;font-size:13px;font-weight:400;color:#202020;letter-spacing:0.928px;font-style:normal;-webkit-text-stroke:0.2px currentColor;">18.10.2016 13:06:44</div>
<div class=t style="left:392.50px;top:573.60px;font-size:13px;font-weight:400;color:#202020;letter-spacing:0.928px;font-style:normal;-webkit-text-stroke:0.2px currentColor;">18.10.2016 14:30:15</div>
<div class=t style="left:595.30px;top:574.60px;font-size:13px;font-weight:400;color:#202020;letter-spacing:0.333px;font-style:normal;-webkit-text-stroke:0.2px currentColor;">0.00</div>
<div class=t style="left:669.30px;top:574.60px;font-size:13px;font-weight:400;color:#202020;letter-spacing:0.333px;font-style:normal;-webkit-text-stroke:0.2px currentColor;">0.00</div>
<div class=t style="left:721.80px;top:574.60px;font-size:13px;font-weight:400;color:#202020;letter-spacing:0.333px;font-style:normal;-webkit-text-stroke:0.2px currentColor;">0.00</div>
<div class=t style="left:790.40px;top:574.60px;font-size:13px;font-weight:400;color:#202020;letter-spacing:0.333px;font-style:normal;-webkit-text-stroke:0.2px currentColor;">0.00</div>
<div class=t style="left:870.50px;top:574.60px;font-size:13px;font-weight:400;color:#202020;letter-spacing:0.333px;font-style:normal;-webkit-text-stroke:0.2px currentColor;">0.00</div>
<div class=t style="left:951.10px;top:574.60px;font-size:13px;font-weight:400;color:#202020;letter-spacing:0.333px;font-style:normal;-webkit-text-stroke:0.2px currentColor;">0.00</div>
<div class=t style="left:1013.90px;top:574.60px;font-size:13px;font-weight:400;color:#202020;letter-spacing:0.333px;font-style:normal;-webkit-text-stroke:0.2px currentColor;">0.00</div>
<div class=t style="left:1146.50px;top:574.60px;font-size:13px;font-weight:400;color:#202020;letter-spacing:0.333px;font-style:normal;-webkit-text-stroke:0.2px currentColor;">0.00</div>
<div class=t style="left:1077.00px;top:573.30px;font-size:13px;font-weight:400;color:#4a4a4a;letter-spacing:0.500px;font-style:normal;-webkit-text-stroke:0.2px currentColor;">10</div>
<div class=t style="left:32.00px;top:599.00px;font-size:13px;font-weight:400;color:#202020;letter-spacing:0.333px;font-style:normal;-webkit-text-stroke:0.2px currentColor;">Zakázka 1b</div>
<div class=t style="left:123.50px;top:600.60px;font-size:13px;font-weight:400;color:#202020;letter-spacing:0.438px;font-style:normal;-webkit-text-stroke:0.2px currentColor;">Receptura</div>
<div class=t style="left:241.30px;top:595.60px;font-size:13px;font-weight:400;color:#202020;letter-spacing:0.928px;font-style:normal;-webkit-text-stroke:0.2px currentColor;">12.10.2016 13:49:40</div>
<div class=t style="left:392.50px;top:595.60px;font-size:13px;font-weight:400;color:#202020;letter-spacing:0.928px;font-style:normal;-webkit-text-stroke:0.2px currentColor;">12.10.2016 15:03:52</div>
<div class=t style="left:595.30px;top:596.90px;font-size:13px;font-weight:400;color:#202020;letter-spacing:0.333px;font-style:normal;-webkit-text-stroke:0.2px currentColor;">0.00</div>
<div class=t style="left:669.30px;top:596.90px;font-size:13px;font-weight:400;color:#202020;letter-spacing:0.333px;font-style:normal;-webkit-text-stroke:0.2px currentColor;">0.00</div>
<div class=t style="left:721.80px;top:596.90px;font-size:13px;font-weight:400;color:#202020;letter-spacing:0.333px;font-style:normal;-webkit-text-stroke:0.2px currentColor;">0.00</div>
<div class=t style="left:790.40px;top:596.90px;font-size:13px;font-weight:400;color:#202020;letter-spacing:0.333px;font-style:normal;-webkit-text-stroke:0.2px currentColor;">0.00</div>
<div class=t style="left:870.50px;top:596.90px;font-size:13px;font-weight:400;color:#202020;letter-spacing:0.333px;font-style:normal;-webkit-text-stroke:0.2px currentColor;">0.00</div>
<div class=t style="left:951.10px;top:596.90px;font-size:13px;font-weight:400;color:#202020;letter-spacing:0.333px;font-style:normal;-webkit-text-stroke:0.2px currentColor;">0.00</div>
<div class=t style="left:1013.90px;top:596.90px;font-size:13px;font-weight:400;color:#202020;letter-spacing:0.333px;font-style:normal;-webkit-text-stroke:0.2px currentColor;">0.00</div>
<div class=t style="left:1146.50px;top:596.90px;font-size:13px;font-weight:400;color:#202020;letter-spacing:0.333px;font-style:normal;-webkit-text-stroke:0.2px currentColor;">0.00</div>
<div class=t style="left:1077.00px;top:595.40px;font-size:13px;font-weight:400;color:#4a4a4a;letter-spacing:0.500px;font-style:normal;-webkit-text-stroke:0.2px currentColor;">10</div>
<div class=t style="left:32.00px;top:620.60px;font-size:13px;font-weight:400;color:#202020;letter-spacing:0.333px;font-style:normal;-webkit-text-stroke:0.2px currentColor;">Zakázka 2b</div>
<div class=t style="left:123.50px;top:620.60px;font-size:13px;font-weight:400;color:#202020;letter-spacing:0.438px;font-style:normal;-webkit-text-stroke:0.2px currentColor;">Receptura</div>
<div class=t style="left:241.30px;top:619.20px;font-size:13px;font-weight:400;color:#202020;letter-spacing:0.928px;font-style:normal;-webkit-text-stroke:0.2px currentColor;">13.10.2016 13:13:29</div>
<div class=t style="left:392.50px;top:619.20px;font-size:13px;font-weight:400;color:#202020;letter-spacing:0.928px;font-style:normal;-webkit-text-stroke:0.2px currentColor;">13.10.2016 15:37:03</div>
<div class=t style="left:595.30px;top:619.30px;font-size:13px;font-weight:400;color:#202020;letter-spacing:0.333px;font-style:normal;-webkit-text-stroke:0.2px currentColor;">0.00</div>
<div class=t style="left:669.30px;top:619.30px;font-size:13px;font-weight:400;color:#202020;letter-spacing:0.333px;font-style:normal;-webkit-text-stroke:0.2px currentColor;">0.00</div>
<div class=t style="left:721.80px;top:619.30px;font-size:13px;font-weight:400;color:#202020;letter-spacing:0.333px;font-style:normal;-webkit-text-stroke:0.2px currentColor;">0.00</div>
<div class=t style="left:790.40px;top:619.30px;font-size:13px;font-weight:400;color:#202020;letter-spacing:0.333px;font-style:normal;-webkit-text-stroke:0.2px currentColor;">0.00</div>
<div class=t style="left:870.50px;top:619.30px;font-size:13px;font-weight:400;color:#202020;letter-spacing:0.333px;font-style:normal;-webkit-text-stroke:0.2px currentColor;">0.00</div>
<div class=t style="left:951.10px;top:619.30px;font-size:13px;font-weight:400;color:#202020;letter-spacing:0.333px;font-style:normal;-webkit-text-stroke:0.2px currentColor;">0.00</div>
<div class=t style="left:1013.90px;top:619.30px;font-size:13px;font-weight:400;color:#202020;letter-spacing:0.333px;font-style:normal;-webkit-text-stroke:0.2px currentColor;">0.00</div>
<div class=t style="left:1146.50px;top:619.30px;font-size:13px;font-weight:400;color:#202020;letter-spacing:0.333px;font-style:normal;-webkit-text-stroke:0.2px currentColor;">0.00</div>
<div class=t style="left:1077.00px;top:618.00px;font-size:13px;font-weight:400;color:#4a4a4a;letter-spacing:0.500px;font-style:normal;-webkit-text-stroke:0.2px currentColor;">10</div>
<div class=t style="left:32.00px;top:643.40px;font-size:13px;font-weight:400;color:#202020;letter-spacing:0.333px;font-style:normal;-webkit-text-stroke:0.2px currentColor;">Zakázka 3b</div>
<div class=t style="left:123.50px;top:645.00px;font-size:13px;font-weight:400;color:#202020;letter-spacing:0.438px;font-style:normal;-webkit-text-stroke:0.2px currentColor;">Receptura</div>
<div class=t style="left:242.30px;top:640.30px;font-size:13px;font-weight:400;color:#202020;letter-spacing:0.872px;font-style:normal;-webkit-text-stroke:0.2px currentColor;">07.10.2016 08:19:28</div>
<div class=t style="left:393.50px;top:640.30px;font-size:13px;font-weight:400;color:#202020;letter-spacing:0.928px;font-style:normal;-webkit-text-stroke:0.2px currentColor;">07.10.2016 10:19:11</div>
<div class=t style="left:595.30px;top:641.90px;font-size:13px;font-weight:400;color:#202020;letter-spacing:0.333px;font-style:normal;-webkit-text-stroke:0.2px currentColor;">0.00</div>
<div class=t style="left:669.30px;top:641.90px;font-size:13px;font-weight:400;color:#202020;letter-spacing:0.333px;font-style:normal;-webkit-text-stroke:0.2px currentColor;">0.00</div>
<div class=t style="left:721.80px;top:641.90px;font-size:13px;font-weight:400;color:#202020;letter-spacing:0.333px;font-style:normal;-webkit-text-stroke:0.2px currentColor;">0.00</div>
<div class=t style="left:790.40px;top:641.90px;font-size:13px;font-weight:400;color:#202020;letter-spacing:0.333px;font-style:normal;-webkit-text-stroke:0.2px currentColor;">0.00</div>
<div class=t style="left:870.50px;top:641.90px;font-size:13px;font-weight:400;color:#202020;letter-spacing:0.333px;font-style:normal;-webkit-text-stroke:0.2px currentColor;">0.00</div>
<div class=t style="left:951.10px;top:641.90px;font-size:13px;font-weight:400;color:#202020;letter-spacing:0.333px;font-style:normal;-webkit-text-stroke:0.2px currentColor;">0.00</div>
<div class=t style="left:1013.90px;top:641.90px;font-size:13px;font-weight:400;color:#202020;letter-spacing:0.333px;font-style:normal;-webkit-text-stroke:0.2px currentColor;">0.00</div>
<div class=t style="left:1146.50px;top:641.90px;font-size:13px;font-weight:400;color:#202020;letter-spacing:0.333px;font-style:normal;-webkit-text-stroke:0.2px currentColor;">0.00</div>
<div class=t style="left:1077.00px;top:640.10px;font-size:13px;font-weight:400;color:#4a4a4a;letter-spacing:0.500px;font-style:normal;-webkit-text-stroke:0.2px currentColor;">10</div>
<div class=t style="left:32.00px;top:665.40px;font-size:13px;font-weight:400;color:#202020;letter-spacing:0.333px;font-style:normal;-webkit-text-stroke:0.2px currentColor;">Zakázka 4b</div>
<div class=t style="left:123.50px;top:666.60px;font-size:13px;font-weight:400;color:#202020;letter-spacing:0.438px;font-style:normal;-webkit-text-stroke:0.2px currentColor;">Receptura</div>
<div class=t style="left:241.30px;top:663.10px;font-size:13px;font-weight:400;color:#202020;letter-spacing:0.928px;font-style:normal;-webkit-text-stroke:0.2px currentColor;">14.10.2016 19:51:02</div>
<div class=t style="left:392.50px;top:663.10px;font-size:13px;font-weight:400;color:#202020;letter-spacing:0.928px;font-style:normal;-webkit-text-stroke:0.2px currentColor;">14.10.2016 21:02:09</div>
<div class=t style="left:595.30px;top:664.70px;font-size:13px;font-weight:400;color:#202020;letter-spacing:0.333px;font-style:normal;-webkit-text-stroke:0.2px currentColor;">0.00</div>
<div class=t style="left:669.30px;top:664.70px;font-size:13px;font-weight:400;color:#202020;letter-spacing:0.333px;font-style:normal;-webkit-text-stroke:0.2px currentColor;">0.00</div>
<div class=t style="left:721.80px;top:664.70px;font-size:13px;font-weight:400;color:#202020;letter-spacing:0.333px;font-style:normal;-webkit-text-stroke:0.2px currentColor;">0.00</div>
<div class=t style="left:790.40px;top:664.70px;font-size:13px;font-weight:400;color:#202020;letter-spacing:0.333px;font-style:normal;-webkit-text-stroke:0.2px currentColor;">0.00</div>
<div class=t style="left:870.50px;top:664.70px;font-size:13px;font-weight:400;color:#202020;letter-spacing:0.333px;font-style:normal;-webkit-text-stroke:0.2px currentColor;">0.00</div>
<div class=t style="left:951.10px;top:664.70px;font-size:13px;font-weight:400;color:#202020;letter-spacing:0.333px;font-style:normal;-webkit-text-stroke:0.2px currentColor;">0.00</div>
<div class=t style="left:1013.90px;top:664.70px;font-size:13px;font-weight:400;color:#202020;letter-spacing:0.333px;font-style:normal;-webkit-text-stroke:0.2px currentColor;">0.00</div>
<div class=t style="left:1146.50px;top:664.70px;font-size:13px;font-weight:400;color:#202020;letter-spacing:0.333px;font-style:normal;-webkit-text-stroke:0.2px currentColor;">0.00</div>
<div class=t style="left:1077.00px;top:662.70px;font-size:13px;font-weight:400;color:#4a4a4a;letter-spacing:0.500px;font-style:normal;-webkit-text-stroke:0.2px currentColor;">10</div>
<div class=t style="left:32.00px;top:688.60px;font-size:13px;font-weight:400;color:#202020;letter-spacing:0.333px;font-style:normal;-webkit-text-stroke:0.2px currentColor;">Zakázka 5b</div>
<div class=t style="left:123.50px;top:688.60px;font-size:13px;font-weight:400;color:#202020;letter-spacing:0.438px;font-style:normal;-webkit-text-stroke:0.2px currentColor;">Receptura</div>
<div class=t style="left:241.30px;top:684.80px;font-size:13px;font-weight:400;color:#202020;letter-spacing:0.928px;font-style:normal;-webkit-text-stroke:0.2px currentColor;">13.10.2016 15:37:03</div>
<div class=t style="left:392.50px;top:684.80px;font-size:13px;font-weight:400;color:#202020;letter-spacing:0.928px;font-style:normal;-webkit-text-stroke:0.2px currentColor;">13.10.2016 19:16:47</div>
<div class=t style="left:595.30px;top:686.60px;font-size:13px;font-weight:400;color:#202020;letter-spacing:0.333px;font-style:normal;-webkit-text-stroke:0.2px currentColor;">0.00</div>
<div class=t style="left:669.30px;top:686.60px;font-size:13px;font-weight:400;color:#202020;letter-spacing:0.333px;font-style:normal;-webkit-text-stroke:0.2px currentColor;">0.00</div>
<div class=t style="left:721.80px;top:686.60px;font-size:13px;font-weight:400;color:#202020;letter-spacing:0.333px;font-style:normal;-webkit-text-stroke:0.2px currentColor;">0.00</div>
<div class=t style="left:790.40px;top:686.60px;font-size:13px;font-weight:400;color:#202020;letter-spacing:0.333px;font-style:normal;-webkit-text-stroke:0.2px currentColor;">0.00</div>
<div class=t style="left:870.50px;top:686.60px;font-size:13px;font-weight:400;color:#202020;letter-spacing:0.333px;font-style:normal;-webkit-text-stroke:0.2px currentColor;">0.00</div>
<div class=t style="left:951.10px;top:686.60px;font-size:13px;font-weight:400;color:#202020;letter-spacing:0.333px;font-style:normal;-webkit-text-stroke:0.2px currentColor;">0.00</div>
<div class=t style="left:1013.90px;top:686.60px;font-size:13px;font-weight:400;color:#202020;letter-spacing:0.333px;font-style:normal;-webkit-text-stroke:0.2px currentColor;">0.00</div>
<div class=t style="left:1146.50px;top:686.60px;font-size:13px;font-weight:400;color:#202020;letter-spacing:0.333px;font-style:normal;-webkit-text-stroke:0.2px currentColor;">0.00</div>
<div class=t style="left:1077.00px;top:684.80px;font-size:13px;font-weight:400;color:#4a4a4a;letter-spacing:0.500px;font-style:normal;-webkit-text-stroke:0.2px currentColor;">10</div>
<div class=t style="left:242.30px;top:709.20px;font-size:13px;font-weight:400;color:#202020;letter-spacing:0.872px;font-style:normal;-webkit-text-stroke:0.2px currentColor;">07.10.2016 07:19:39</div>
<div class=t style="left:393.50px;top:709.20px;font-size:13px;font-weight:400;color:#202020;letter-spacing:0.872px;font-style:normal;-webkit-text-stroke:0.2px currentColor;">07.10.2016 08:19:28</div>
<div class=t style="left:1077.00px;top:708.60px;font-size:13px;font-weight:400;color:#4a4a4a;letter-spacing:0.500px;font-style:normal;-webkit-text-stroke:0.2px currentColor;">10</div>
<div class=t style="left:222.00px;top:688.03px;font-size:10px;font-weight:400;color:#555;letter-spacing:0.800px;font-style:normal;">...</div>
<div class=t style="left:56.50px;top:720.66px;font-size:9.5px;font-weight:400;color:#222;letter-spacing:0.081px;font-style:normal;z-index:6;-webkit-text-stroke:0.1px currentColor;">1. říjen 2016 00:00:00</div>
<div class=t style="left:57.50px;top:733.26px;font-size:9.5px;font-weight:400;color:#222;letter-spacing:0.067px;font-style:normal;z-index:6;-webkit-text-stroke:0.1px currentColor;">20. únor 2017 23:59:59</div>
<div class=t style="left:1102.00px;top:727.76px;font-size:9.5px;font-weight:400;color:#222;letter-spacing:0.045px;font-style:normal;z-index:6;-webkit-text-stroke:0.1px currentColor;">143d 0:59:59</div>
<svg width="1200" height="750" viewBox="0 0 1200 750" style="z-index:5">
 <!-- footer -->
 <rect x="23.2" y="718" width="1153.6" height="29.5" fill="#dcdcdc"/>
 <g fill="none" stroke="#1a1a1a" stroke-width="1.4">
  <path d="M25.9 731.5a7.2 7.2 0 1 1 1.2 5.4"/><path d="M33 729.2v4h4.2"/>
 </g>
 <path d="M23 731.2h5.8l-2.9 3.6z" fill="#1a1a1a"/>
 <g fill="none" stroke="#555" stroke-width="1.3">
  <circle cx="192" cy="731.5" r="10"/><circle cx="215.5" cy="731.5" r="10"/>
 </g>
 <g fill="#111">
  <path d="M186.3 731.7l5.5-2.8v5.6zM191.8 731.7l5.5-2.8v5.6z"/>
  <path d="M220.8 731.7l-5.5-2.8v5.6zM215.3 731.7l-5.5-2.8v5.6z"/>
 </g>
 <rect x="244" y="732.3" width="843.5" height="1.2" fill="#c2c2c2"/>
 <circle cx="1035.5" cy="732.4" r="6.6" fill="#000"/>
</svg>

</body></html>
